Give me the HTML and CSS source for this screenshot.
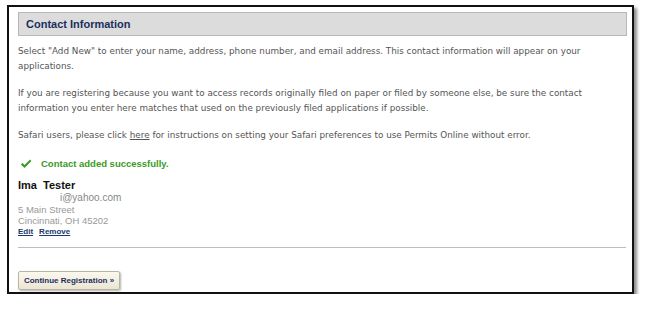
FILE: index.html
```html
<!DOCTYPE html>
<html>
<head>
<meta charset="utf-8">
<link rel="stylesheet" href="styles.css">
</head>
<body>
<div class="frame">
  <div class="header"><h1 class="title">Contact Information</h1></div>
  <p class="para">Select "Add New" to enter your name, address, phone number, and email address. This contact information will appear on your applications.</p>
  <p class="para">If you are registering because you want to access records originally filed on paper or filed by someone else, be sure the contact information you enter here matches that used on the previously filed applications if possible.</p>
  <p class="para">Safari users, please click <a class="plain-link" href="#">here</a> for instructions on setting your Safari preferences to use Permits Online without error.</p>
  <div class="success">
    <svg class="check" width="12" height="10" viewBox="0 0 12 10"><path d="M0.8 5.4 L2.6 3.9 L4.6 5.9 L10 0.6 L11.4 2 L4.6 8.9 Z" fill="#3d9a2a"/></svg>
    <span class="success-text">Contact added successfully.</span>
  </div>
  <div class="contact">
    <div class="name">Ima&nbsp; Tester</div>
    <div class="email">i@yahoo.com</div>
    <div class="addr">5 Main Street</div>
    <div class="addr">Cincinnati, OH 45202</div>
    <div class="actions"><a href="#" class="act">Edit</a><a href="#" class="act">Remove</a></div>
  </div>
  <hr class="rule">
  <button class="btn">Continue Registration »</button>
</div>
</body>
</html>
```
FILE: styles.css
```css
html, body { margin: 0; padding: 0; background: #fff; }
.frame {
  margin: 5px 0 0 7px;
  border: 2px solid #111;
  box-shadow: 3px 3px 3px rgba(0,0,0,0.45);
  padding: 5px 5px 0 9px;
  box-sizing: content-box;
  width: 609px;
  height: 280px;
  font-family: "DejaVu Sans", Verdana, sans-serif;
}
.header {
  background: #dcdcdc;
  border: 1px solid #b8b8b8;
  height: 22px;
  display: flex;
  align-items: center;
  padding-left: 7px;
}
.title {
  margin: 0;
  font-family: "Liberation Sans", Arial, sans-serif;
  font-weight: bold;
  font-size: 11px;
  color: #1c2f5e;
}
.para {
  margin: 12px 0 12px 0;
  font-size: 8.8px;
  line-height: 15px;
  color: #555;
}
.header + .para { margin-top: 8px; }
.plain-link { color: #555; }
.success {
  display: flex;
  align-items: center;
  gap: 9px;
  margin-top: 15px;
  padding-left: 2px;
}
.success-text {
  font-family: "Liberation Sans", Arial, sans-serif;
  font-weight: bold;
  font-size: 9.5px;
  color: #3a9a1e;
}
.contact {
  margin-top: 10px;
  font-family: "Liberation Sans", Arial, sans-serif;
}
.name { font-weight: bold; font-size: 11px; color: #111; line-height: 13px; }
.email { font-size: 10px; color: #888; line-height: 12px; padding-left: 42px; }
.addr { font-size: 9.5px; color: #999; line-height: 11px; }
.actions { display: flex; gap: 6px; line-height: 11px; }
.act { font-size: 8px; font-weight: bold; color: #1c3a6e; }
.rule {
  margin: 10px 0 0 0;
  border: 0;
  border-top: 1px solid #bdbdbd;
  width: 608px;
}
.btn {
  margin-top: 23px;
  font-family: "Liberation Sans", Arial, sans-serif;
  font-size: 8px;
  font-weight: bold;
  color: #1c2f5e;
  background: linear-gradient(#fbf8ee, #ebe5d3);
  border: 1px solid #b9b4a5;
  border-radius: 2px;
  box-shadow: 1px 1px 2px rgba(0,0,0,0.3);
  padding: 0 4px;
  height: 19px;
  width: 102px;
  white-space: nowrap;
}
```
